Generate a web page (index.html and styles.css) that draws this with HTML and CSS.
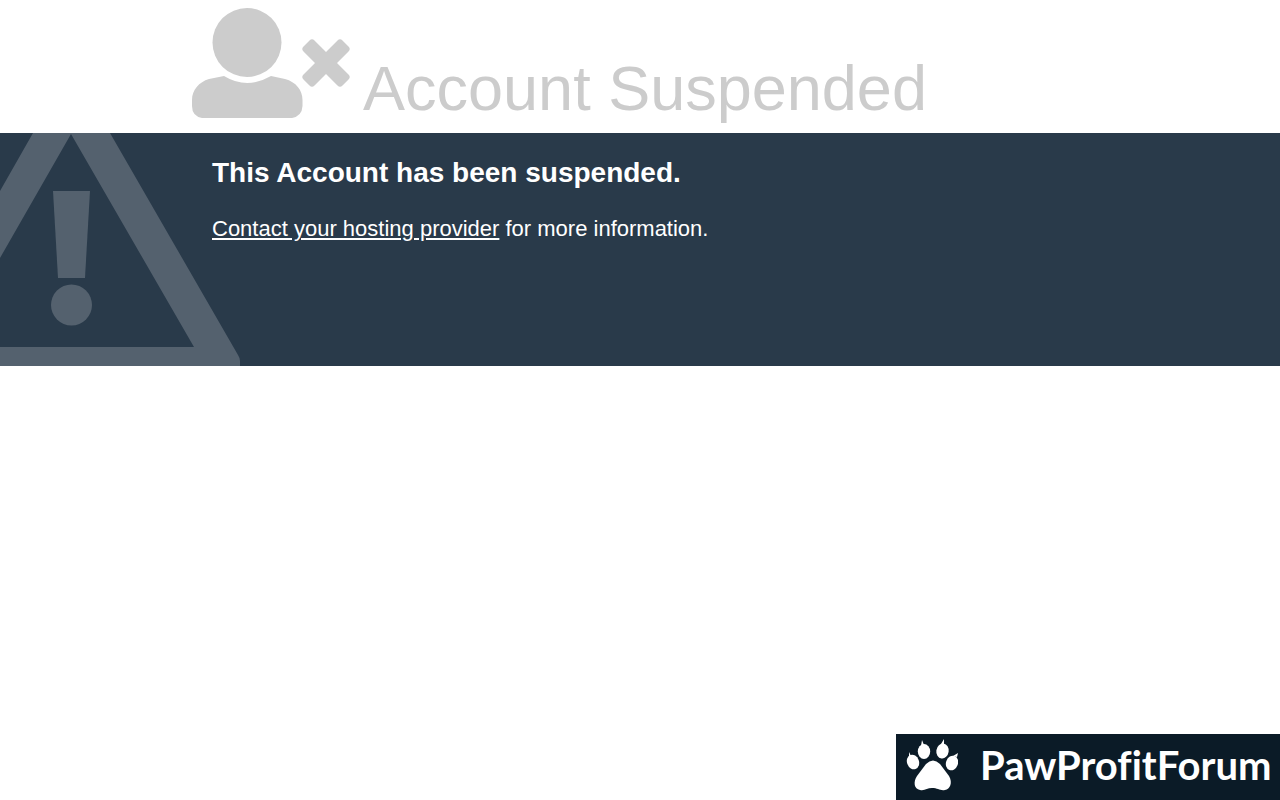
FILE: index.html
```html
<!DOCTYPE html>
<html lang="en">
<head>
    <meta charset="UTF-8">
    <meta name="viewport" content="width=device-width, initial-scale=1.0">
    <title>Account Suspended</title>
    <link rel="stylesheet" href="styles.css">
</head>
<body>
    <header class="container heading">
        <svg class="user-icon" viewBox="0 0 158 110" aria-hidden="true">
            <circle cx="55" cy="34.5" r="34.5"/>
            <path d="M32 68 Q55 82 79 68 L93 71 C104 74 110.500 82 110.500 92 V98 Q110 108 100 110 H10 Q0 108 0 98 V92 C0 82 7 74 17 71 Z"/>
            <path d="M134 44 L145.500 32.500 Q148 30 150.500 32.500 L156.500 38.500 Q159 41 156.500 43.500 L145 55 L156.500 66.500 Q159 69 156.500 71.500 L150.500 77.500 Q148 80 145.500 77.500 L134 66 L122.500 77.500 Q120 80 117.500 77.500 L111.500 71.500 Q109 69 111.500 66.500 L123 55 L111.500 43.500 Q109 41 111.500 38.500 L117.500 32.500 Q120 30 122.500 32.500 Z"/>
        </svg>
        <h1>Account Suspended</h1>
    </header>
    <main class="notice">
        <svg class="warning-icon" viewBox="0 0 240 233" aria-hidden="true">
            <path fill-rule="evenodd" d="M33 0 H110 L238 222 Q240 225 240 228 V233 H0 V214 H194 L71 1 L0 125 V58 Z"/>
            <path d="M53 58 H90 L85 145 H58 Z"/>
            <circle cx="71.5" cy="172" r="20.5"/>
        </svg>
        <div class="container message">
            <h2>This Account has been suspended.</h2>
            <p><a href="#">Contact your hosting provider</a> for more information.</p>
        </div>
    </main>
    <div class="brand">
        <svg class="paw" viewBox="0 0 52 52" aria-hidden="true">
            <ellipse cx="7" cy="23" rx="6" ry="7.5" transform="rotate(-20 7 23)"/>
            <ellipse cx="18" cy="12.5" rx="6.2" ry="7.5"/>
            <ellipse cx="36.5" cy="12" rx="6.2" ry="7.5" transform="rotate(8 36.5 12)"/>
            <ellipse cx="46" cy="24" rx="6" ry="7.5" transform="rotate(20 46 24)"/>
            <path d="M3 18 L3 13 L5 17 Z M15 7 L16 1 L18 6 Z M35 5 L38 0 L38 6 Z M47 17 L52 14 L51 18 Z"/>
            <path d="M20 25 Q27 18 34 25 C37 29 40 33 43 37 C47 44 44 50 39 51 C34 52 32 49 26 49 C21 49 19 52 14 51 C8 50 7 43 11 37 C14 33 17 29 20 25 Z"/>
        </svg>
        <span class="brand-name">PawProfitForum</span>
    </div>
</body>
</html>
```
FILE: styles.css
```css
* {
    box-sizing: border-box;
}
body {
    margin: 0;
    background-color: #fff;
    color: #ccc;
    font-family: "Liberation Sans", Arial, sans-serif;
    font-size: 22px;
}
h1, h2, p {
    margin: 0;
}
.container {
    padding: 0 15%;
}
.heading {
    display: flex;
    align-items: flex-start;
    gap: 13px;
    padding-top: 8px;
}
.user-icon {
    flex: none;
    width: 158px;
    height: 110px;
    fill: #ccc;
}
h1 {
    padding-top: 44px;
    padding-bottom: 8px;
    font-size: 63px;
    font-weight: normal;
    line-height: 73px;
}
.notice {
    display: grid;
    min-height: 233px;
    background-color: #293a4a;
    color: #fff;
}
/* the icon sits behind the message in the same grid cell */
.warning-icon {
    grid-area: 1 / 1;
    width: 240px;
    height: 233px;
    fill: #54616e;
}
.message {
    grid-area: 1 / 1;
    z-index: 1;
    padding-top: 24px;
}
.message h2,
.message p {
    padding-left: 20px;
}
h2 {
    font-size: 28px;
    line-height: 32px;
}
.message p {
    margin-top: 27px;
    line-height: 26px;
}
.message a {
    color: #fff;
}
.brand {
    position: fixed;
    right: 0;
    bottom: 0;
    display: flex;
    align-items: center;
    gap: 22px;
    width: 30%;
    height: 66px;
    padding: 0 0 4px 10px;
    background-color: #0b1b27;
    color: #fff;
}
.paw {
    flex: none;
    width: 52px;
    height: 52px;
    fill: #fff;
}
.brand-name {
    font-family: Lato, sans-serif;
    font-size: 40px;
    font-weight: bold;
    font-variant-ligatures: none;
    line-height: 50px;
}
```
